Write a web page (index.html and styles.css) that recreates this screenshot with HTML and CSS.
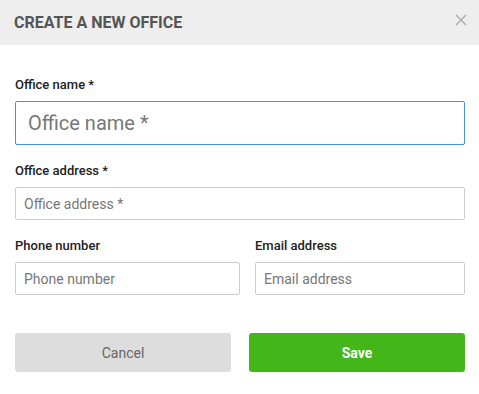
FILE: index.html
```html
<!DOCTYPE html>
<html>
<head>
<meta charset="utf-8">
<link rel="stylesheet" href="styles.css">
</head>
<body>
<div class="modal">
  <div class="modal-header">
    <h1 class="modal-title">CREATE A NEW OFFICE</h1>
    <svg class="close" width="12" height="12" viewBox="0 0 12 12" aria-label="Close"><path d="M1 1L11 11M11 1L1 11" stroke="#a9a9a9" stroke-width="1.4" fill="none"/></svg>
  </div>
  <div class="modal-body">
    <div class="field">
      <label class="label">Office name *</label>
      <input class="input input-lg focused" type="text" placeholder="Office name *">
    </div>
    <div class="field">
      <label class="label">Office address *</label>
      <input class="input" type="text" placeholder="Office address *">
    </div>
    <div class="row">
      <div class="field">
        <label class="label">Phone number</label>
        <input class="input" type="text" placeholder="Phone number">
      </div>
      <div class="field">
        <label class="label">Email address</label>
        <input class="input" type="text" placeholder="Email address">
      </div>
    </div>
    <div class="actions">
      <button class="btn btn-cancel">Cancel</button>
      <button class="btn btn-save">Save</button>
    </div>
  </div>
</div>
</body>
</html>
```
FILE: styles.css
```css
* { box-sizing: border-box; }
html, body { margin: 0; padding: 0; background: #fff; }
body { font-family: Roboto, "Liberation Sans", sans-serif; }

.modal { width: 479px; }

.modal-header {
  height: 45px;
  background: #eeeeee;
  display: flex;
  align-items: center;
  justify-content: space-between;
  padding: 0 12px 0 14px;
}
.modal-title {
  margin: 0;
  font-size: 16px;
  font-weight: 700;
  color: #555555;
  line-height: 20px;
}
.close { display: block; margin-top: -5px; }

.modal-body { padding: 32px 14px 0 15px; }

.field { margin-bottom: 18px; }
.label {
  display: block;
  font-size: 13px;
  font-weight: 500;
  line-height: 16px;
  color: #222222;
  margin-bottom: 8px;
}
.input {
  display: block;
  width: 100%;
  height: 33px;
  border: 1px solid #cccccc;
  border-radius: 2px;
  padding: 0 8px;
  font-family: Roboto, "Liberation Sans", sans-serif;
  font-size: 14px;
  color: #333;
  background: #fff;
  outline: none;
}
.input::placeholder { color: #777777; }
.input-lg {
  height: 44px;
  font-size: 20px;
  padding: 0 12px;
}
.focused { border-color: #4a90e2; }

.row {
  display: grid;
  grid-template-columns: 225px 1fr;
  column-gap: 15px;
}
.row .field { margin-bottom: 38px; }

.actions {
  display: grid;
  grid-template-columns: 1fr 1fr;
  column-gap: 18px;
}
.btn {
  height: 39px;
  border: none;
  border-radius: 3px;
  font-family: Roboto, "Liberation Sans", sans-serif;
  font-size: 14px;
}
.btn-cancel { background: #dddddd; color: #666666; }
.btn-save { background: #43b619; color: #ffffff; font-weight: 700; }
```
